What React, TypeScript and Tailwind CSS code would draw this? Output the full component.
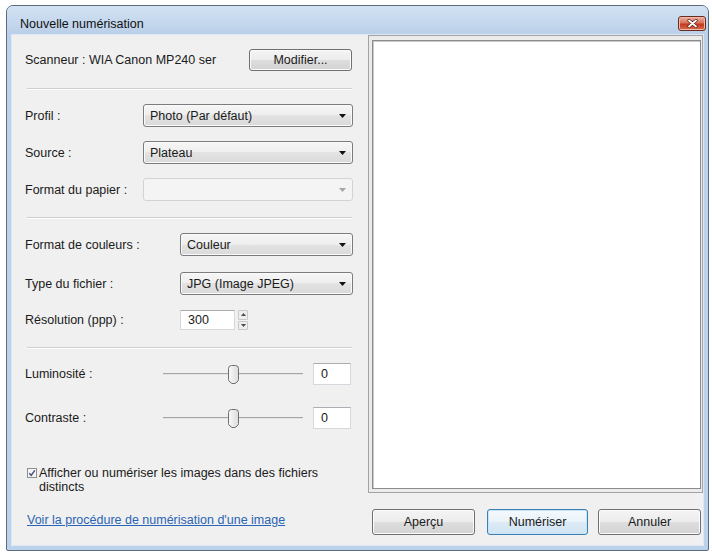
import clsx from 'clsx';

// Boîte de dialogue « Nouvelle numérisation » (style Windows 7)

function Arrow({ disabled }: { disabled?: boolean }) {
  return (
    <svg width="7" height="4" viewBox="0 0 7 4">
      <polygon points="0,0 7,0 3.5,4" fill={disabled ? '#a7a7a7' : '#111111'} />
    </svg>
  );
}

function Combo({ value, disabled }: { value?: string; disabled?: boolean }) {
  return (
    <div
      className={clsx(
        'flex-1 h-[23px] flex items-center rounded-[3px] border pl-[6px] pr-[6px]',
        disabled
          ? 'border-[#d3d3d3] bg-[#f4f4f4]'
          : 'border-[#7c7c7c] bg-[linear-gradient(#f6f6f6,#eeeeee_50%,#e3e3e3_50%,#dadada)] shadow-[inset_0_0_0_1px_#fafafa]'
      )}
    >
      <span className="flex-1 leading-[14px] truncate">{value}</span>
      <Arrow disabled={disabled} />
    </div>
  );
}

function Button({ label, primary, className }: { label: string; primary?: boolean; className?: string }) {
  return (
    <button
      className={clsx(
        'flex items-center justify-center rounded-[3px] border leading-[14px]',
        primary
          ? 'border-[#3c7fb1] bg-[linear-gradient(#f4f9fd,#e9f3fa_50%,#dcebf6_50%,#d2e5f3)] shadow-[inset_0_0_0_1px_#c5e6fa]'
          : 'border-[#707070] bg-[linear-gradient(#f4f4f4,#ececec_50%,#dedede_50%,#d3d3d3)] shadow-[inset_0_0_0_1px_#fbfbfb]',
        className
      )}
    >
      {label}
    </button>
  );
}

function Separator({ className }: { className?: string }) {
  return <div className={clsx('h-[2px] ml-[2px] mr-[1px] border-t border-[#cfcfcf] border-b border-b-white', className)} />;
}

function TextBox({ value, className }: { value: string; className?: string }) {
  return (
    <div
      className={clsx(
        'flex items-center bg-white border border-[#d6d8dd] border-t-[#abadb3] pl-[7px] leading-[14px]',
        className
      )}
    >
      {value}
    </div>
  );
}

function Slider() {
  return (
    <div className="w-[140px] flex items-center">
      <div className="flex-1 h-[2px] border-t border-[#a5a5a5] bg-[#e4e4e4]" />
      <svg width="11" height="19" viewBox="0 0 11 19">
        <defs>
          <linearGradient id="thumb" x1="0" y1="0" x2="1" y2="0">
            <stop offset="0" stopColor="#fafafa" />
            <stop offset="1" stopColor="#dcdcdc" />
          </linearGradient>
        </defs>
        <path d="M3.5 0.5 H7.5 Q10.5 0.5 10.5 3.5 V14.5 Q10.5 16 9 17 L7 18.5 H4 L2 17 Q0.5 16 0.5 14.5 V3.5 Q0.5 0.5 3.5 0.5 Z" fill="url(#thumb)" stroke="#6f6f6f" />
      </svg>
      <div className="flex-1 h-[2px] border-t border-[#a5a5a5] bg-[#e4e4e4]" />
    </div>
  );
}

function Spinner() {
  return (
    <div className="ml-[3px] w-[10px] h-[20px] flex flex-col gap-px">
      <div className="flex-1 flex items-center justify-center border border-[#c9c9c9] bg-[#eeeeee] rounded-[1px]">
        <svg width="5" height="3" viewBox="0 0 5 3"><polygon points="0,3 5,3 2.5,0" fill="#4a4a4a" /></svg>
      </div>
      <div className="flex-1 flex items-center justify-center border border-[#c9c9c9] bg-[#eeeeee] rounded-[1px]">
        <svg width="5" height="3" viewBox="0 0 5 3"><polygon points="0,0 5,0 2.5,3" fill="#4a4a4a" /></svg>
      </div>
    </div>
  );
}

export default function App() {
  return (
    <div className="w-[712px] h-[554px] bg-white pt-[5px] pl-[6px] font-['Liberation_Sans',Arial,sans-serif] text-[12.5px] text-[#1a1a1a]">
      <div className="w-[703px] h-[546px] rounded-t-[7px] rounded-b-[2px] border border-[#5b6c80] bg-[#bcd2ea] flex flex-col overflow-hidden">
        {/* barre de titre */}
        <div className="h-[29px] flex items-start pl-[13px] pr-[2px] bg-linear-to-b from-[#d3e2f3] to-[#b9cfe8]">
          <span className="mt-[11px] leading-[15px] text-[#111]">Nouvelle numérisation</span>
          <div className="ml-auto mt-[10px] w-[28px] h-[15px] rounded-[3px] border border-[#6a2a1f] bg-[linear-gradient(#eab1a2,#d9735a_45%,#c2391f_55%,#d96d4e)] flex items-center justify-center shadow-[inset_0_0_0_1px_#f0b9a8]">
            <svg width="11" height="9" viewBox="0 0 11 9">
              <path d="M2 1.5 L9 7.5 M9 1.5 L2 7.5" stroke="#5a1d14" strokeWidth="3.2" strokeLinecap="round" />
              <path d="M2 1.5 L9 7.5 M9 1.5 L2 7.5" stroke="#ffffff" strokeWidth="1.8" strokeLinecap="round" />
            </svg>
          </div>
        </div>

        <div className="flex-1 flex pl-[5px] pr-[5px] pb-[5px]">
          <div className="flex-1 flex bg-[#f0f0f0] shadow-[0_0_0_1px_#dde8f3]">
            {/* volet gauche */}
            <div className="w-[356px] pl-[13px] pr-[15px] pt-[14px] flex flex-col">
              <div className="h-[22px] flex items-center justify-between">
                <span className="leading-[14px]">Scanneur : WIA Canon MP240 ser</span>
                <Button label="Modifier..." className="w-[103px] h-[22px] mr-[1px]" />
              </div>

              <Separator className="mt-[17px]" />

              <div className="mt-[14px] flex items-center">
                <span className="w-[118px] leading-[14px]">Profil :</span>
                <Combo value="Photo (Par défaut)" />
              </div>
              <div className="mt-[14px] flex items-center">
                <span className="w-[118px] leading-[14px]">Source :</span>
                <Combo value="Plateau" />
              </div>
              <div className="mt-[14px] flex items-center">
                <span className="w-[118px] leading-[14px]">Format du papier :</span>
                <Combo disabled />
              </div>

              <Separator className="mt-[16px]" />

              <div className="mt-[14px] flex items-center">
                <span className="w-[155px] leading-[14px]">Format de couleurs :</span>
                <Combo value="Couleur" />
              </div>
              <div className="mt-[16px] flex items-center">
                <span className="w-[155px] leading-[14px]">Type du fichier :</span>
                <Combo value="JPG (Image JPEG)" />
              </div>
              <div className="mt-[15px] flex items-center">
                <span className="w-[155px] leading-[14px]">Résolution (ppp) :</span>
                <TextBox value="300" className="w-[55px] h-[20px]" />
                <Spinner />
              </div>

              <Separator className="mt-[17px]" />

              <div className="mt-[14px] h-[22px] flex items-center">
                <span className="w-[138px] leading-[14px]">Luminosité :</span>
                <Slider />
                <TextBox value="0" className="ml-[10px] w-[38px] h-[22px]" />
              </div>
              <div className="mt-[22px] h-[22px] flex items-center">
                <span className="w-[138px] leading-[14px]">Contraste :</span>
                <Slider />
                <TextBox value="0" className="ml-[10px] w-[38px] h-[22px]" />
              </div>

              <div className="mt-[37px] ml-[2px] flex items-start">
                <svg width="10" height="10" viewBox="0 0 10 10" className="mt-[2px] shrink-0">
                  <rect x="0.5" y="0.5" width="9" height="9" fill="#f4f4f4" stroke="#8e8f8f" />
                  <path d="M2.3 5.2 L4.2 7.3 L7.8 2.4" fill="none" stroke="#3d4f7a" strokeWidth="1.4" />
                </svg>
                <span className="ml-[2px] leading-[14px]">
                  Afficher ou numériser les images dans des fichiers
                  <br />
                  distincts
                </span>
              </div>

              <a className="mt-[19px] ml-[2px] leading-[14px] text-[#2a64b4] underline">
                Voir la procédure de numérisation d'une image
              </a>
            </div>

            {/* volet droit : aperçu */}
            <div className="w-[335px] flex flex-col">
              <div className="h-[458px] flex border border-[#a3a3a3] bg-[#ebebeb] pl-[3px] pt-[4px] pr-[1px] pb-[3px]">
                <div className="flex-1 bg-white border border-[#8c8c8c] shadow-[inset_1px_1px_0_#c9c9c9]" />
              </div>
              <div className="mt-[16px] pl-[4px] flex">
                <Button label="Aperçu" className="w-[103px] h-[26px]" />
                <Button label="Numériser" primary className="ml-[12px] w-[101px] h-[26px]" />
                <Button label="Annuler" className="ml-[10px] w-[103px] h-[26px]" />
              </div>
            </div>
          </div>
        </div>
      </div>
    </div>
  );
}
